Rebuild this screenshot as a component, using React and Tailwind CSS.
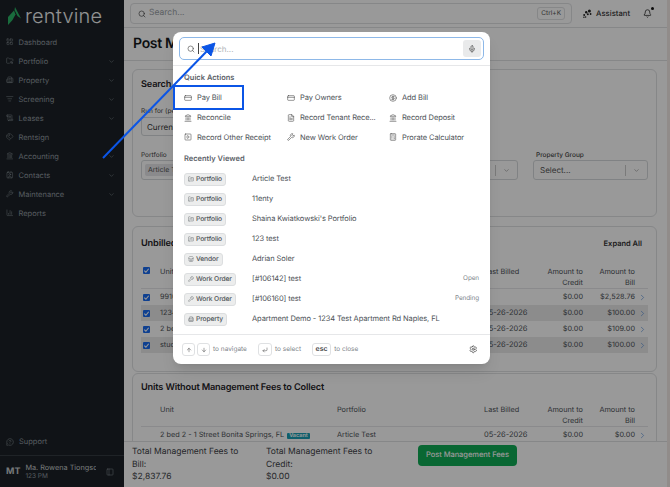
import {
  ArrowDown, ArrowUp, Bell, Building2, Calculator, ChartColumn, ChevronDown, ChevronRight, CircleDollarSign,
  Contact, CornerDownLeft, CreditCard, FileText, FolderKanban, FolderSearch, Landmark, LayoutGrid, ListFilter,
  MessageCircleQuestion, Mic, PanelLeft, ScrollText, Search, Settings, SquarePlay, Store, Tags, Wrench,
} from 'lucide-react'

const navItems = [
  { label: 'Dashboard', icon: LayoutGrid },
  { label: 'Portfolio', icon: FolderSearch, more: true },
  { label: 'Property', icon: Building2, more: true },
  { label: 'Screening', icon: ListFilter, more: true },
  { label: 'Leases', icon: ScrollText, more: true },
  { label: 'Rentsign', icon: Tags },
  { label: 'Accounting', icon: Landmark, more: true },
  { label: 'Contacts', icon: Contact, more: true },
  { label: 'Maintenance', icon: Wrench, more: true },
  { label: 'Reports', icon: ChartColumn },
]

const quickActions = [
  { label: 'Pay Bill', icon: CreditCard },
  { label: 'Pay Owners', icon: CreditCard },
  { label: 'Add Bill', icon: CircleDollarSign },
  { label: 'Reconcile', icon: Landmark },
  { label: 'Record Tenant Rece...', icon: FileText },
  { label: 'Record Deposit', icon: Landmark },
  { label: 'Record Other Receipt', icon: SquarePlay },
  { label: 'New Work Order', icon: Wrench },
  { label: 'Prorate Calculator', icon: Calculator },
]

const recentItems = [
  { type: 'Portfolio', icon: FolderKanban, name: 'Article Test' },
  { type: 'Portfolio', icon: FolderKanban, name: '11enty' },
  { type: 'Portfolio', icon: FolderKanban, name: "Shaina Kwiatkowski's Portfolio" },
  { type: 'Portfolio', icon: FolderKanban, name: '123 test' },
  { type: 'Vendor', icon: Store, name: 'Adrian Soler' },
  { type: 'Work Order', icon: Wrench, name: '[#106142] test', status: 'Open' },
  { type: 'Work Order', icon: Wrench, name: '[#106160] test', status: 'Pending' },
  { type: 'Property', icon: Building2, name: 'Apartment Demo - 1234 Test Apartment Rd Naples, FL' },
]

const unbilledRows = [
  { unit: '9910', billed: '', credit: '$0.00', bill: '$2,528.76' },
  { unit: '1234', billed: '05-26-2026', credit: '$0.00', bill: '$100.00' },
  { unit: '2 bed', billed: '05-26-2026', credit: '$0.00', bill: '$109.00' },
  { unit: 'studio', billed: '05-26-2026', credit: '$0.00', bill: '$100.00' },
]

const tableCols = 'grid grid-cols-[19px_177px_147px_55px_44px_52px_13px] items-center'

function Checkbox() {
  return (
    <span className="flex h-[7px] w-[7px] items-center justify-center rounded-[1px] bg-[#1a6bf0]">
      <svg viewBox="0 0 8 8" className="h-[7px] w-[7px]" fill="none" stroke="white" strokeWidth="1.3">
        <path d="M1.5 4.2 3.3 6 6.5 2" />
      </svg>
    </span>
  )
}

function Sidebar() {
  return (
    <aside className="flex h-full w-[124px] shrink-0 flex-col bg-[#1b2127] text-[#929aa1]">
      <div className="flex h-[32.7px] shrink-0 items-center gap-[4px] pl-[7px]">
        <svg viewBox="0 0 14 18" className="h-[18px] w-[14px]">
          <path d="M1 18V10L7 3.5 8.5 7.5 5.5 13Z" fill="#2bb566" />
          <path d="M8 0 14 11.5 10.5 9 7.5 3Z" fill="#2bb566" />
        </svg>
        <span className="text-[20px] leading-none font-light tracking-[0.2px] text-[#f2f3f3]">rentvine</span>
      </div>
      <nav className="flex flex-col">
        {navItems.map(({ label, icon: Icon, more }) => (
          <div key={label} className="flex h-[19px] items-center pl-[6px] pr-[9px] text-[7.5px]">
            <Icon className="mr-[5px] h-[7.5px] w-[7.5px]" strokeWidth={1.5} />
            <span className="flex-1">{label}</span>
            {more && <ChevronDown className="h-[7px] w-[7px]" strokeWidth={1.5} />}
          </div>
        ))}
      </nav>
      <div className="mt-auto flex h-[26px] items-center gap-[5px] pl-[6px] text-[7.5px]">
        <MessageCircleQuestion className="h-[8px] w-[8px]" strokeWidth={1.5} />
        Support
      </div>
      <div className="flex h-[32px] items-center border-t border-[#343b42] pl-[6px] pr-[10px]">
        <span className="mr-[5px] text-[9px] font-bold text-[#c5c9cc]">MT</span>
        <div className="w-[71px] overflow-hidden leading-none">
          <div className="whitespace-nowrap text-[7.3px] text-[#c5c9cc]">Ma. Rowena Tiongson</div>
          <div className="mt-[2px] text-[6.5px]">123 PM</div>
        </div>
        <PanelLeft className="ml-auto h-[8px] w-[8px]" strokeWidth={1.5} />
      </div>
    </aside>
  )
}

function TopBar() {
  return (
    <header className="flex h-[28px] shrink-0 items-center border-b border-[#dfe1e3] pl-[6px] pr-[15px]">
      <div className="flex h-[21px] w-[442px] items-center rounded-[4px] border border-[#dfe1e3] pl-[7px] pr-[6px] text-[8.5px] text-[#9aa0a6]">
        <Search className="mr-[3px] h-[8px] w-[8px] text-[#444]" />
        Search...
        <span className="ml-auto rounded-[3px] border border-[#dfe1e3] px-[3px] py-[1px] text-[6.5px] text-[#555]">Ctrl+K</span>
      </div>
      <svg viewBox="0 0 9 9" className="ml-[11px] h-[9px] w-[9px]" fill="#222">
        <circle cx="6.4" cy="2" r="1.5" />
        <circle cx="3.2" cy="3.2" r="1.2" />
        <circle cx="7.6" cy="5" r="0.9" />
        <circle cx="4.8" cy="5.2" r="1" />
        <circle cx="1.2" cy="6" r="1" />
        <circle cx="2.6" cy="8" r="0.8" />
        <circle cx="0.9" cy="8.2" r="0.7" />
      </svg>
      <span className="ml-[4px] text-[7.7px] font-medium text-[#333]">Assistant</span>
      <div className="relative ml-auto">
        <Bell className="h-[9px] w-[9px] text-[#222]" />
        <span className="absolute -right-[1.5px] -top-[2px] h-[3px] w-[3px] rounded-full bg-[#111]" />
      </div>
    </header>
  )
}

function FieldSelect({ className, children }) {
  return (
    <div className={`flex h-[20px] items-center rounded-[3px] border border-[#d6d9dc] text-[8px] text-[#555] ${className}`}>
      {children}
      <span className="ml-auto h-[11px] w-px bg-[#ccc]" />
      <ChevronDown className="mx-[7px] h-[7px] w-[7px] text-[#888]" />
    </div>
  )
}

function TableHead({ withCheck }) {
  return (
    <div className="grid h-[32px] grid-cols-[19px_177px_147px_55px_44px_52px_13px] items-start border-b border-[#e6e7e9] pt-[9px] text-[7.3px] leading-[11px] text-[#4d5257]">
      <span>{withCheck && <span className="ml-[2px] mt-[1px] block w-[7px]"><Checkbox /></span>}</span>
      <span>Unit</span>
      <span>Portfolio</span>
      <span className="whitespace-nowrap">Last Billed</span>
      <span className="whitespace-nowrap text-right">Amount to<br />Credit</span>
      <span className="whitespace-nowrap text-right">Amount to<br />Bill</span>
      <span />
    </div>
  )
}

function CardTitle({ children }) {
  return <h2 className="text-[9.2px] font-semibold leading-[14px] tracking-[-0.15px] text-[#1f2328]">{children}</h2>
}

function SearchCard() {
  return (
    <section className="h-[148px] rounded-[6px] border border-[#dfe1e3] px-[8px] pt-[8px]">
      <CardTitle>Search</CardTitle>
      <label className="mt-[15px] block text-[6.5px] leading-[8px] text-[#444]">Run for (period)</label>
      <div className="mt-[2px] flex h-[19px] w-[160px] items-center rounded-[3px] border border-[#d6d9dc] pl-[5px] text-[8px] text-[#333]">
        Current
      </div>
      <div className="mt-[15px] flex">
        <div className="w-[377px]">
          <label className="block text-[6.5px] leading-[8px] text-[#444]">Portfolio</label>
          <FieldSelect className="mt-[1px] pl-[3px]">
            <span className="rounded-[2px] bg-[#e6e7e9] px-[3px] py-[1px] text-[7px]">Article Test</span>
          </FieldSelect>
        </div>
        <div className="ml-[15px] w-[115px]">
          <label className="ml-[3px] block text-[6.5px] font-medium leading-[8px] text-[#444]">Property Group</label>
          <FieldSelect className="mt-[1px] pl-[6px]">Select...</FieldSelect>
        </div>
      </div>
    </section>
  )
}

function UnbilledCard() {
  return (
    <section className="mt-[9px] h-[146px] rounded-[6px] border border-[#dfe1e3] px-[8px] pt-[10px]">
      <div className="flex items-center justify-between pr-[6px]">
        <CardTitle>Unbilled</CardTitle>
        <span className="text-[7.5px] font-semibold text-[#333]">Expand All</span>
      </div>
      <div className="mt-[6px]">
        <TableHead withCheck />
        {unbilledRows.map((row, i) => (
          <div key={row.bill + i} className={`${tableCols} h-[16px] text-[7.3px] text-[#4d5257] ${i % 2 ? 'bg-[#e9e9ea]' : ''}`}>
            <span className="ml-[2px] block w-[7px]"><Checkbox /></span>
            <span>{row.unit}</span>
            <span />
            <span className="text-[7.5px]">{row.billed}</span>
            <span className="text-right">{row.credit}</span>
            <span className="text-right">{row.bill}</span>
            <ChevronRight className="ml-[3px] h-[9px] w-[9px] text-[#3f7fd0]" strokeWidth={1.5} />
          </div>
        ))}
      </div>
    </section>
  )
}

function UnitsCard() {
  return (
    <section className="mt-[1px] h-[80px] rounded-[6px] border border-[#dfe1e3] px-[8px] pt-[7px]">
      <CardTitle>Units Without Management Fees to Collect</CardTitle>
      <TableHead />
      <div className={`${tableCols} h-[16px] text-[7.3px] text-[#4d5257]`}>
        <span />
        <span className="whitespace-nowrap">
          2 bed 2 - 1 Street Bonita Springs, FL
          <span className="ml-[3px] rounded-[1px] bg-[#1a9fb5] px-[2px] text-[5.5px] font-semibold text-white">Vacant</span>
        </span>
        <span>Article Test</span>
        <span className="text-[7.5px]">05-26-2026</span>
        <span className="text-right">$0.00</span>
        <span className="text-right">$0.00</span>
        <ChevronRight className="ml-[3px] h-[9px] w-[9px] text-[#3f7fd0]" strokeWidth={1.5} />
      </div>
    </section>
  )
}

function MainArea() {
  return (
    <main className="flex h-full min-w-0 flex-1 flex-col bg-white">
      <TopBar />
      <div className="flex h-[33px] shrink-0 items-center border-b border-[#dfe1e3] pl-[9px]">
        <h1 className="whitespace-nowrap text-[14px] font-semibold leading-none tracking-[-0.3px] text-[#16191c]">Post Management Fees</h1>
      </div>
      <div className="min-h-0 flex-1 overflow-hidden px-[8px] pt-[8px] pr-[10px]">
        <SearchCard />
        <UnbilledCard />
        <UnitsCard />
      </div>
      <footer className="flex h-[46px] shrink-0 border-t border-[#dfe1e3] bg-white pl-[8px] pt-[4px] text-[8.5px] leading-[12.5px] text-[#3d4247]">
        <div className="w-[134px] pr-[20px]">
          Total Management Fees to Bill:
          <div>$2,837.76</div>
        </div>
        <div className="w-[152px] pr-[40px]">
          Total Management Fees to Credit:
          <div>$0.00</div>
        </div>
        <div className="-mt-[1px] flex h-[21px] w-[99px] items-center justify-center rounded-[4px] bg-[#10ac56] text-[7.5px] font-medium tracking-[-0.05px] text-white">
          Post Management Fees
        </div>
      </footer>
    </main>
  )
}

function Key({ children, className = 'w-[13px]' }) {
  return (
    <span className={`flex h-[13px] items-center justify-center rounded-[3px] border border-[#dfe1e3] text-[7px] font-semibold text-[#444] ${className}`}>
      {children}
    </span>
  )
}

function CommandModal() {
  return (
    <div className="absolute left-[173px] top-[32px] flex h-[332px] w-[317px] flex-col rounded-[8px] bg-white shadow-lg">
      <div className="border-b border-[#e6e7e9] px-[6px] pb-[5px] pt-[5px]">
        <div className="flex h-[23px] items-center rounded-[5px] border border-[#8db8e8] pl-[7px] pr-[2px] text-[8px] text-[#b0b4b8]">
          <Search className="mr-[3px] h-[8px] w-[8px] text-[#555]" />
          <span className="mr-[1px] h-[11px] w-px bg-[#444]" />
          Search...
          <span className="ml-auto flex h-[17px] w-[18px] items-center justify-center rounded-[3px] bg-[#e9eaeb]">
            <Mic className="h-[8px] w-[8px] text-[#444]" />
          </span>
        </div>
      </div>
      <div className="px-[11px] pt-[6px]">
        <h3 className="text-[7.5px] font-semibold leading-[12px] text-[#5c6269]">Quick Actions</h3>
        <div className="mt-[4px] grid grid-cols-[103px_102px_1fr]">
          {quickActions.map(({ label, icon: Icon }) => (
            <div key={label} className="flex h-[19.7px] items-center gap-[5px] text-[7.5px] tracking-[-0.1px] text-[#4d5257]">
              <Icon className="h-[8px] w-[8px] shrink-0 text-[#333]" strokeWidth={1.5} />
              <span className="whitespace-nowrap">{label}</span>
            </div>
          ))}
        </div>
        <h3 className="mt-[6px] text-[7.5px] font-semibold leading-[12px] text-[#5c6269]">Recently Viewed</h3>
        <div className="mt-[4px]">
          {recentItems.map(({ type, icon: Icon, name, status }, i) => (
            <div key={i} className="flex h-[20px] items-center text-[7.5px] tracking-[-0.1px] text-[#4d5257]">
              <div className="w-[68px]">
                <span className="inline-flex h-[13px] items-center gap-[2px] rounded-[3px] border border-[#dcdee0] bg-[#eceded] px-[3px] text-[6.7px] font-medium text-[#4d5257]">
                  <Icon className="h-[6px] w-[6px]" strokeWidth={1.5} />
                  {type}
                </span>
              </div>
              <span>{name}</span>
              {status && <span className="ml-auto text-[6.4px] text-[#80868b]">{status}</span>}
            </div>
          ))}
        </div>
      </div>
      <div className="mt-auto flex h-[30px] items-center border-t border-[#e6e7e9] pl-[9px] pr-[13px] text-[6.5px] text-[#80868b]">
        <Key><ArrowUp className="h-[6px] w-[6px]" /></Key>
        <Key className="ml-[2px] w-[13px]"><ArrowDown className="h-[6px] w-[6px]" /></Key>
        <span className="ml-[3px]">to navigate</span>
        <Key className="ml-[11px] w-[14px]"><CornerDownLeft className="h-[6px] w-[6px]" /></Key>
        <span className="ml-[3px]">to select</span>
        <Key className="ml-[11px] w-[19px]">esc</Key>
        <span className="ml-[3px]">to close</span>
        <Settings className="ml-auto h-[8.5px] w-[8.5px] text-[#444]" />
      </div>
    </div>
  )
}

export default function App() {
  return (
    <div className="relative flex h-[487px] w-[670px] overflow-hidden bg-[#f2e9e6] [font-family:Inter,'Noto_Sans',sans-serif] [text-rendering:geometricPrecision]">
      <div className="flex h-full w-[667px] shrink-0">
        <Sidebar />
        <MainArea />
      </div>

      <div className="absolute inset-0 bg-black/40" />
      <CommandModal />

      {/* annotation drawn on top of the screenshot */}
      <div className="absolute left-[173px] top-[85px] h-[25px] w-[71px] border-2 border-[#0b55e6]" />
      <svg className="absolute left-0 top-0 h-[487px] w-[670px]" viewBox="0 0 670 487" fill="none">
        <path d="M103 158 208 50" stroke="#0b55e6" strokeWidth="2" />
        <path d="M215 43 211 56 202 47Z" fill="#0b55e6" stroke="#0b55e6" strokeWidth="1" />
      </svg>
    </div>
  )
}
